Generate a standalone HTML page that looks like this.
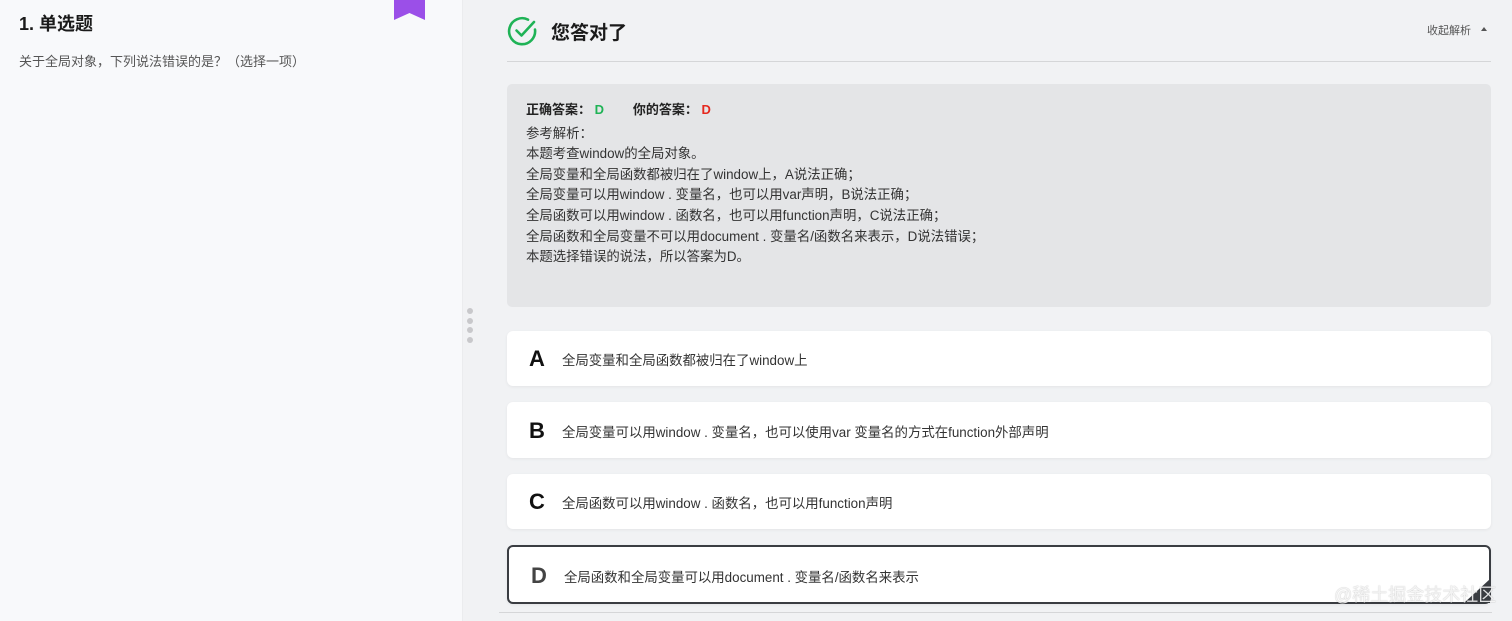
<!DOCTYPE html>
<html><head><meta charset="utf-8"><style>
*{margin:0;padding:0;box-sizing:border-box}
body{width:1512px;height:621px;overflow:hidden;background:#f1f2f4;font-family:"Liberation Sans","Noto Sans CJK SC",sans-serif;position:relative;color:#222}
.left{position:absolute;left:0;top:0;width:463px;height:621px;background:#f8f9fb;border-right:1px solid #ebecee}
.left h1{position:absolute;left:19px;top:10px;font-size:18px;font-weight:bold;color:#1a1a1a}
.left p{position:absolute;left:19px;top:51px;font-size:13px;color:#555}
.bm{position:absolute;left:394px;top:0;width:31px;height:20px;background:#9b4fe8;clip-path:polygon(0 0,100% 0,100% 100%,50% 65%,0 100%)}
.dots{position:absolute;left:467px;top:308px}
.dots i{display:block;width:6px;height:6px;border-radius:3px;background:#c8c8cb;margin-bottom:3.5px}
.hdr{position:absolute;left:507px;top:15px}
.hdr span{position:absolute;left:44px;top:3px;font-size:19px;font-weight:bold;white-space:nowrap;color:#1a1a1a}
.fold{position:absolute;left:1427px;top:22px;font-size:11px;color:#555;white-space:nowrap}
.fold b{display:inline-block;margin-left:10px;border:3.5px solid transparent;border-bottom:4px solid #555;vertical-align:3px}
.line{position:absolute;left:507px;top:61px;width:984px;height:1px;background:#d5d6d8}
.box{position:absolute;left:507px;top:84px;width:984px;height:223px;background:#e4e5e7;border-radius:5px;padding:16px 19px;font-size:13.4px;line-height:20.6px;color:#333}
.box .ans{font-weight:bold;color:#222;margin-bottom:3px;font-size:13px}
.card{position:absolute;left:507px;width:984px;background:#fff;border-radius:6px;box-shadow:0 1px 3px rgba(0,0,0,.06)}
.card b{position:absolute;left:22px;font-size:22px;font-weight:bold;color:#111}
.card span{position:absolute;left:55px;font-size:13.4px;color:#333}
.bot{position:absolute;left:499px;top:612px;width:993px;height:1px;background:#d5d6d8}
.wm{position:absolute;left:1334px;top:581px;font-size:18px;color:rgba(255,255,255,.85);text-shadow:0 0 1px rgba(0,0,0,.35);white-space:nowrap}
</style></head><body>
<div class="left"><h1>1. 单选题</h1><p>关于全局对象，下列说法错误的是？（选择一项）</p><div class="bm"></div></div>
<div class="dots"><i></i><i></i><i></i><i></i></div>
<div class="hdr"><svg width="32" height="32" viewBox="0 0 32 32"><path d="M28 14.5A13 13 0 1 1 21 4.6" fill="none" stroke="#1fb356" stroke-width="2.6" stroke-linecap="round"/><path d="M9.5 15.5l5 5L27 7" fill="none" stroke="#1fb356" stroke-width="2.6" stroke-linecap="round" stroke-linejoin="round"/></svg><span>您答对了</span></div>
<div class="fold">收起解析<b></b></div>
<div class="line"></div>
<div class="box"><div class="ans">正确答案： <span style="color:#1fb356">D</span>&nbsp;&nbsp;&nbsp;&nbsp;&nbsp;&nbsp;&nbsp;&nbsp;你的答案： <span style="color:#e5281e">D</span></div>
参考解析：<br>本题考查window的全局对象。<br>全局变量和全局函数都被归在了window上，A说法正确；<br>全局变量可以用window . 变量名，也可以用var声明，B说法正确；<br>全局函数可以用window . 函数名，也可以用function声明，C说法正确；<br>全局函数和全局变量不可以用document . 变量名/函数名来表示，D说法错误；<br>本题选择错误的说法，所以答案为D。</div>
<div class="card" style="top:331px;height:55px"><b style="top:15px">A</b><span style="top:18px">全局变量和全局函数都被归在了window上</span></div>
<div class="card" style="top:402px;height:56px"><b style="top:16px">B</b><span style="top:19px">全局变量可以用window . 变量名，也可以使用var 变量名的方式在function外部声明</span></div>
<div class="card" style="top:474px;height:55px"><b style="top:15px">C</b><span style="top:18px">全局函数可以用window . 函数名，也可以用function声明</span></div>
<div class="card" style="top:545px;height:59px;border:2px solid #3a3d42"><b style="top:16px;color:#444">D</b><span style="top:19px">全局函数和全局变量可以用document . 变量名/函数名来表示</span><div style="position:absolute;right:-1px;bottom:-1px;width:26px;height:24px;background:#3a3d42;clip-path:polygon(100% 0,100% 100%,0 100%)"></div></div>
<div class="bot"></div>
<div class="wm">@稀土掘金技术社区</div>
</body></html>
